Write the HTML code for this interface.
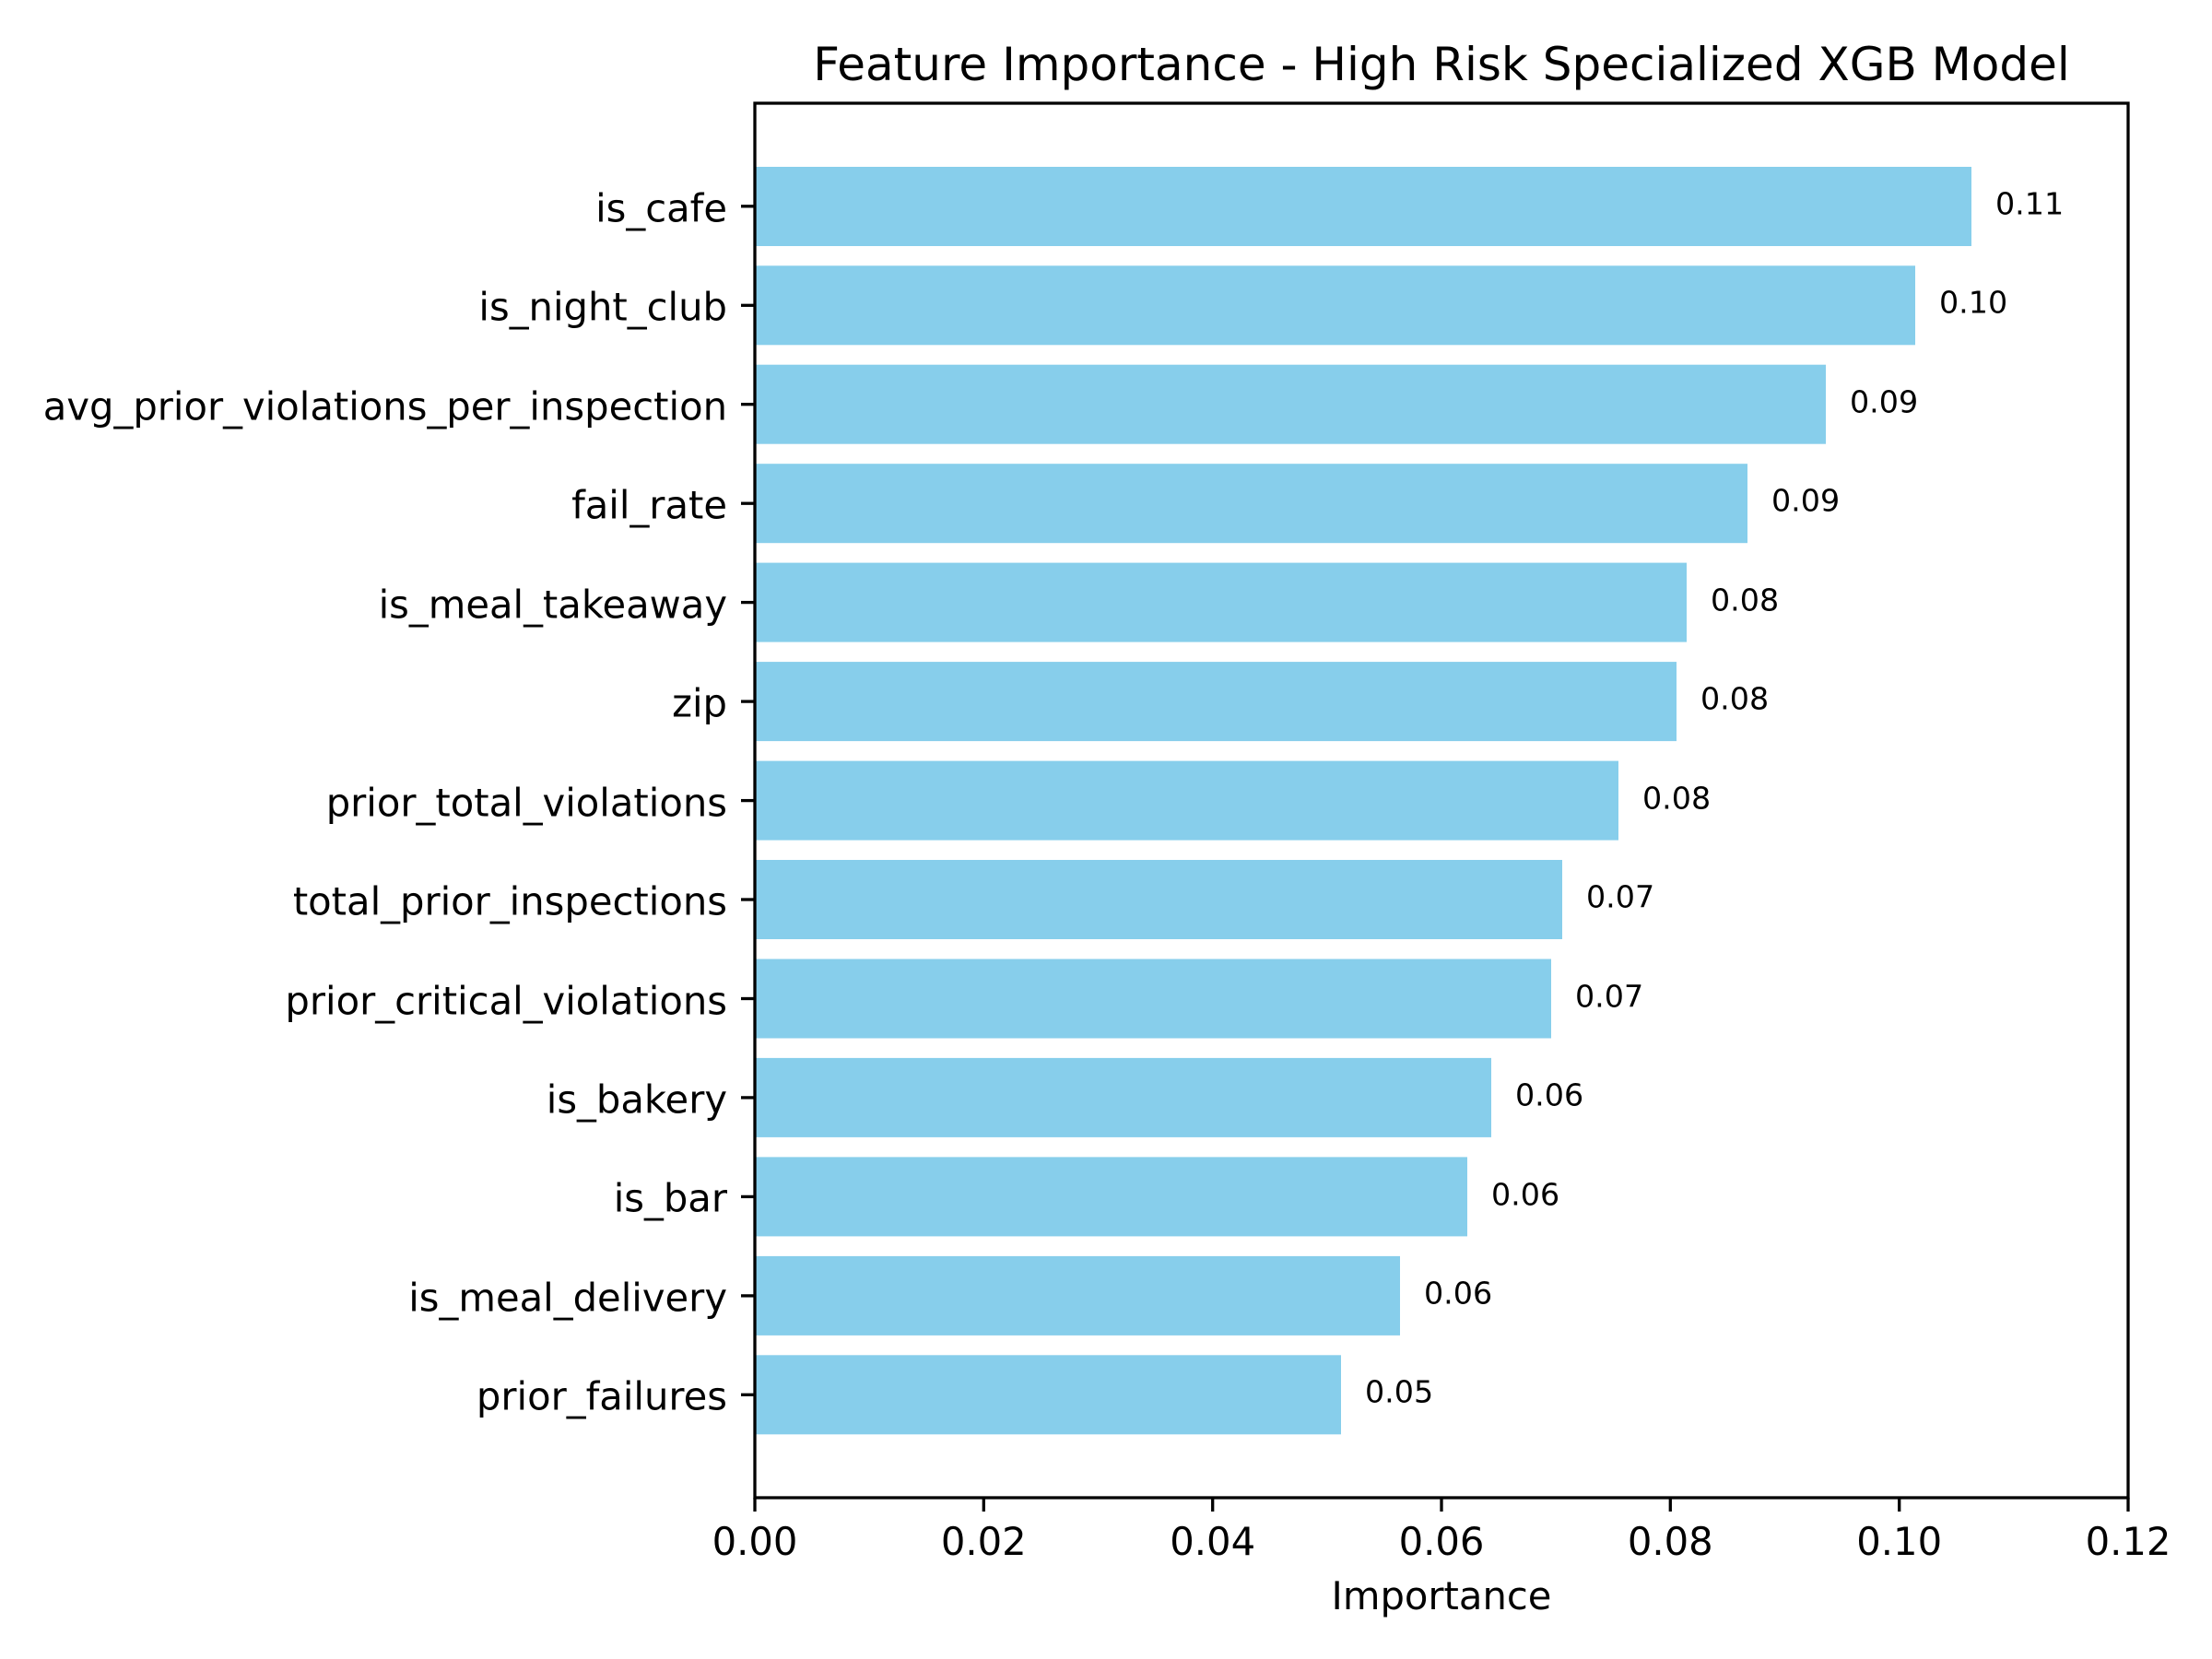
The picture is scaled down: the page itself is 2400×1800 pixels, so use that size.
<!DOCTYPE html>
<html><head><meta charset="utf-8"><style>html,body{margin:0;padding:0;background:#fff}svg{display:block}</style></head>
<body>
<svg width="2400" height="1800" viewBox="0 0 2400 1800" xmlns="http://www.w3.org/2000/svg" font-family="'DejaVu Sans','Liberation Sans',sans-serif">
<rect width="2400" height="1800" fill="#fff"/>
<g fill="#87ceeb">
<rect x="819" y="181" width="1320" height="86"/>
<rect x="819" y="288.3" width="1259" height="86"/>
<rect x="819" y="395.7" width="1162" height="86"/>
<rect x="819" y="503.2" width="1077" height="86"/>
<rect x="819" y="610.6" width="1011" height="86"/>
<rect x="819" y="718.1" width="1000" height="86"/>
<rect x="819" y="825.6" width="937" height="86"/>
<rect x="819" y="933.0" width="876" height="86"/>
<rect x="819" y="1040.5" width="864" height="86"/>
<rect x="819" y="1147.9" width="799" height="86"/>
<rect x="819" y="1255.4" width="773" height="86"/>
<rect x="819" y="1362.9" width="700" height="86"/>
<rect x="819" y="1470.3" width="636" height="86"/>
</g>
<rect x="819" y="112" width="1490" height="1513" fill="none" stroke="#000" stroke-width="3.3"/>
<g stroke="#000" stroke-width="3.3">
<line x1="804" x2="819" y1="223.8" y2="223.8"/><line x1="804" x2="819" y1="331.3" y2="331.3"/><line x1="804" x2="819" y1="438.7" y2="438.7"/><line x1="804" x2="819" y1="546.2" y2="546.2"/><line x1="804" x2="819" y1="653.6" y2="653.6"/><line x1="804" x2="819" y1="761.1" y2="761.1"/><line x1="804" x2="819" y1="868.6" y2="868.6"/><line x1="804" x2="819" y1="976.0" y2="976.0"/><line x1="804" x2="819" y1="1083.5" y2="1083.5"/><line x1="804" x2="819" y1="1190.9" y2="1190.9"/><line x1="804" x2="819" y1="1298.4" y2="1298.4"/><line x1="804" x2="819" y1="1405.9" y2="1405.9"/><line x1="804" x2="819" y1="1513.3" y2="1513.3"/>
<line x1="819" x2="819" y1="1625" y2="1640"/><line x1="1067.3" x2="1067.3" y1="1625" y2="1640"/><line x1="1315.7" x2="1315.7" y1="1625" y2="1640"/><line x1="1564" x2="1564" y1="1625" y2="1640"/><line x1="1812.3" x2="1812.3" y1="1625" y2="1640"/><line x1="2060.7" x2="2060.7" y1="1625" y2="1640"/><line x1="2309" x2="2309" y1="1625" y2="1640"/>
</g>
<g font-size="41.7" text-anchor="end" dominant-baseline="central" fill="#000">
<text x="789" y="226">is_cafe</text>
<text x="789" y="333">is_night_club</text>
<text x="789" y="441">avg_prior_violations_per_inspection</text>
<text x="789" y="548">fail_rate</text>
<text x="789" y="656">is_meal_takeaway</text>
<text x="789" y="763">zip</text>
<text x="789" y="871">prior_total_violations</text>
<text x="789" y="978">total_prior_inspections</text>
<text x="789" y="1086">prior_critical_violations</text>
<text x="789" y="1193">is_bakery</text>
<text x="789" y="1300">is_bar</text>
<text x="789" y="1408">is_meal_delivery</text>
<text x="789" y="1515">prior_failures</text>
</g>
<g font-size="33.3" dominant-baseline="central" fill="#000">
<text x="2165" y="221">0.11</text>
<text x="2104" y="328">0.10</text>
<text x="2007" y="436">0.09</text>
<text x="1922" y="543">0.09</text>
<text x="1856" y="651">0.08</text>
<text x="1845" y="758">0.08</text>
<text x="1782" y="866">0.08</text>
<text x="1721" y="973">0.07</text>
<text x="1709" y="1081">0.07</text>
<text x="1644" y="1188">0.06</text>
<text x="1618" y="1296">0.06</text>
<text x="1545" y="1403">0.06</text>
<text x="1481" y="1510">0.05</text>
</g>
<g font-size="41.7" text-anchor="middle" fill="#000">
<text x="819" y="1687">0.00</text><text x="1067.3" y="1687">0.02</text><text x="1315.7" y="1687">0.04</text><text x="1564" y="1687">0.06</text><text x="1812.3" y="1687">0.08</text><text x="2060.7" y="1687">0.10</text><text x="2309" y="1687">0.12</text>
<text x="1564" y="1746">Importance</text>
</g>
<text x="1564" y="87" font-size="50" text-anchor="middle" fill="#000">Feature Importance - High Risk Specialized XGB Model</text>
</svg>
</body></html>
